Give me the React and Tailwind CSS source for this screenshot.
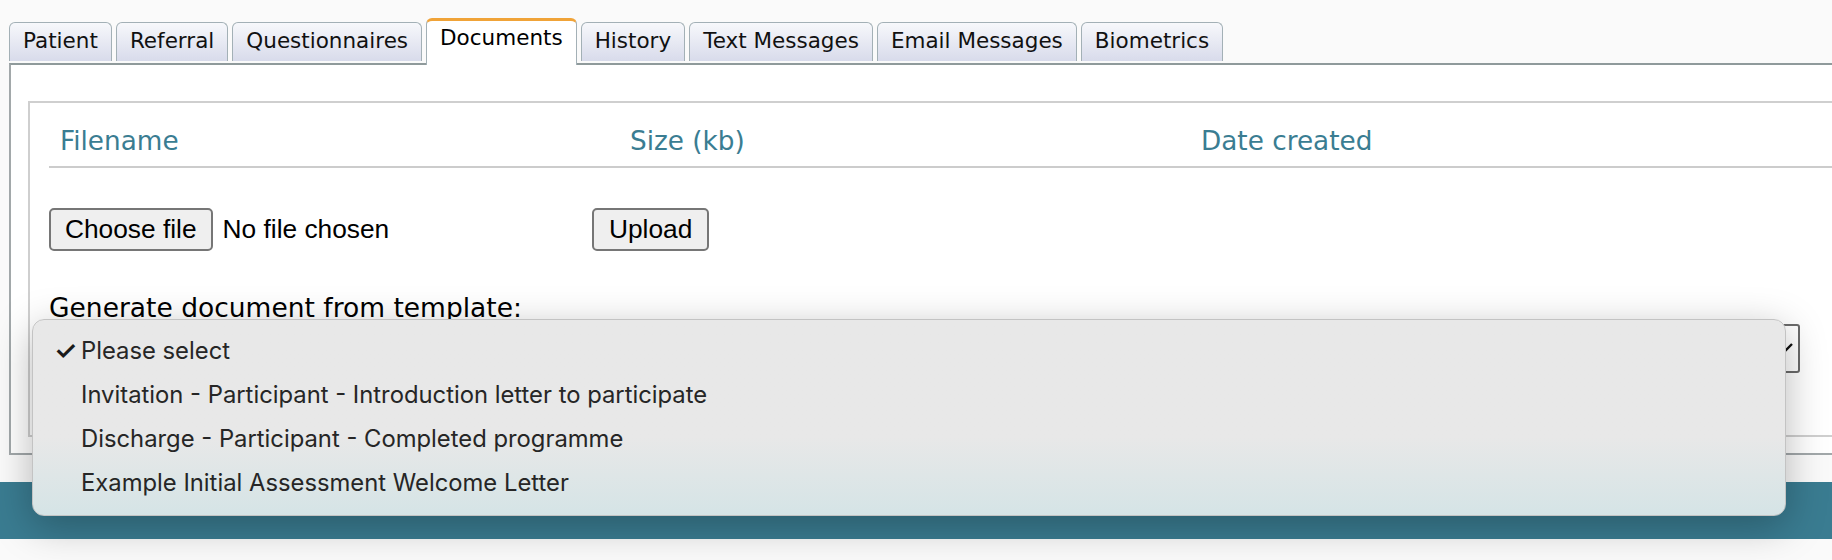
import React from 'react';

const tabs = ['Patient', 'Referral', 'Questionnaires', 'Documents', 'History', 'Text Messages', 'Email Messages', 'Biometrics'];

const templates = [
  'Please select',
  'Invitation - Participant - Introduction letter to participate',
  'Discharge - Participant - Completed programme',
  'Example Initial Assessment Welcome Letter',
];

function Tab({ label, active }) {
  if (active) {
    return (
      <div className="relative z-10 -mb-[2px] flex h-[47px] items-start rounded-t-[6px] border-x border-t-[3px] border-x-[#a3b0b6] border-t-[#f0a338] bg-white px-[13px] pt-[4px] text-[21.5px] leading-[26px] text-black">
        {label}
      </div>
    );
  }
  return (
    <div className="mb-[2px] flex h-[39px] items-start rounded-t-[6px] border border-b-0 border-[#a3b0b6] bg-gradient-to-b from-[#f7f8fb] to-[#d8dbeb] px-[13px] pt-[5px] text-[21.5px] leading-[26px] text-[#111]">
      {label}
    </div>
  );
}

export default function App() {
  return (
    <div className="relative h-[560px] w-[1832px] overflow-hidden bg-[#fafafa] font-['DejaVu_Sans',sans-serif]">
      <div className="pl-[9px] pt-[18px]">
        {/* Tabs */}
        <div className="flex h-[45px] items-end gap-[4px]">
          {tabs.map((t) => (
            <Tab key={t} label={t} active={t === 'Documents'} />
          ))}
        </div>

        {/* Panel */}
        <div className="h-[392px] w-[1840px] border-2 border-[#a2a8aa] border-t-[#8f9a9b] bg-white pl-[17px] pt-[36px]">
          <div className="h-[336px] w-[1820px] border-2 border-[#cfcfcf] pl-[19px]">
            {/* Header */}
            <div className="flex border-b-2 border-[#cccccc] pb-[10px] pt-[23px] text-[26.3px] leading-[30px] text-[#3a7d92]">
              <div className="w-[570px] pl-[11px]">Filename</div>
              <div className="w-[571px] pl-[11px]">Size (kb)</div>
              <div className="pl-[11px]">Date created</div>
            </div>

            {/* Upload row */}
            <div className="mt-[40px] flex items-center font-['Liberation_Sans',Arial,sans-serif] text-[26.3px] text-black">
              <div className="flex w-[543px] items-center">
                <button className="h-[43px] rounded-[5px] border-2 border-[#767676] bg-[#efefef] px-[14px] leading-none">
                  Choose file
                </button>
                <span className="ml-[10px]">No file chosen</span>
              </div>
              <button className="h-[43px] rounded-[5px] border-2 border-[#767676] bg-[#efefef] px-[15px] leading-none">
                Upload
              </button>
            </div>

            {/* Template */}
            <div className="mt-[42px] text-[26.5px] leading-[30px] text-black">Generate document from template:</div>
            <div className="relative mt-[1px] h-[49px] w-[1751px] rounded-[3px] border-2 border-[#6b6b6b] bg-white">
              <svg className="absolute right-[4px] top-[15px]" width="16" height="12" viewBox="0 0 16 12">
                <path d="M2 3 L8 9 L14 3" fill="none" stroke="#111" strokeWidth="2.4" />
              </svg>
            </div>
          </div>
        </div>
      </div>

      {/* Footer bar */}
      <div className="mt-[27px] h-[57px] bg-[#3a7c91]" />

      {/* Open select menu */}
      <div className="absolute left-[32px] top-[319px] h-[197px] w-[1754px] rounded-[12px] border border-[#c3c3c3] bg-gradient-to-b from-[#e8e8e8] from-60% to-[#d5e4e6] pt-[9px] font-['Inter',sans-serif] text-[23.8px] text-[#262626] shadow-[0_10px_40px_rgba(0,0,0,0.28)]">
        {templates.map((t, i) => (
          <div key={t} className="flex h-[44px] items-center pl-[21px]">
            <span className="w-[27px] text-[26px] font-semibold leading-none text-[#1a1a1a]">{i === 0 ? '✓' : ''}</span>
            <span>{t}</span>
          </div>
        ))}
      </div>
    </div>
  );
}
